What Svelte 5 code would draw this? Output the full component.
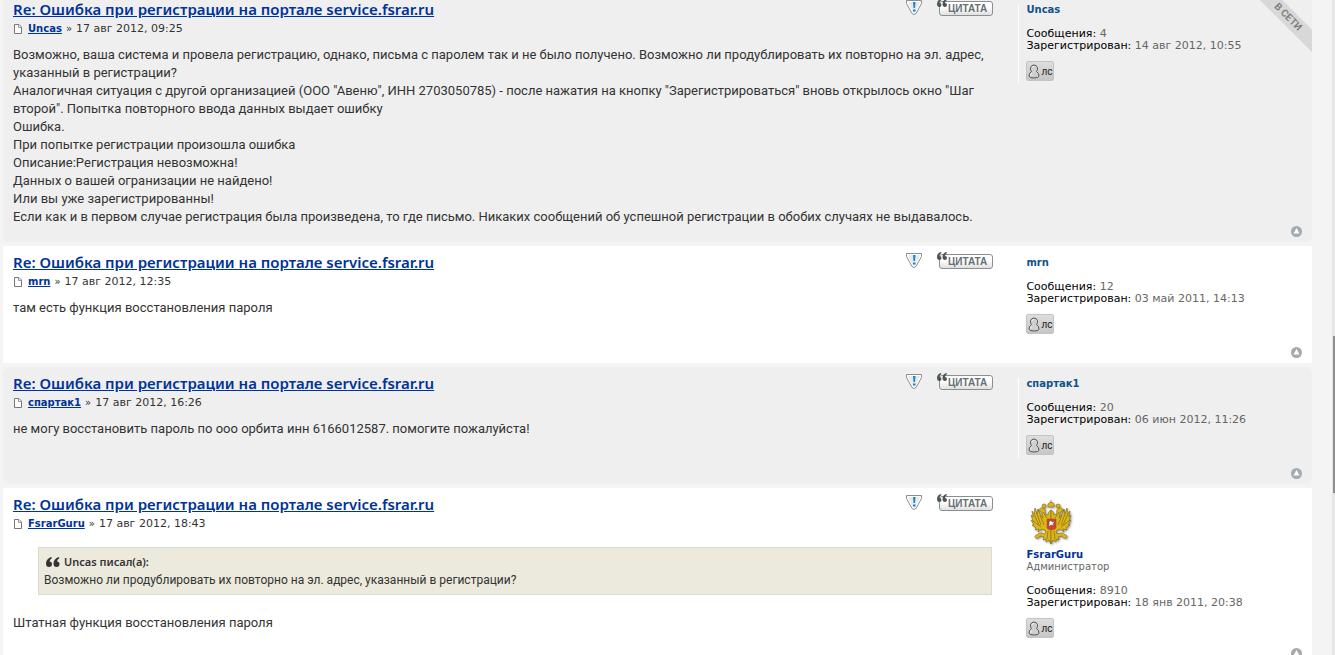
<!-- App.svelte -->
<script lang="ts">
    type Post = {
        id: number;
        author: string;
        date: string;
        quote?: { author: string; text: string };
        lines: string[];
        posts: number;
        joined: string;
        rank?: string;
        admin?: boolean;
        online?: boolean;
    };

    const title = 'Re: Ошибка при регистрации на портале service.fsrar.ru';

    const posts: Post[] = [
        {
            id: 1,
            author: 'Uncas',
            date: '17 авг 2012, 09:25',
            lines: [
                'Возможно, ваша система и провела регистрацию, однако, письма с паролем так и не было получено. Возможно ли продублировать их повторно на эл. адрес, указанный в регистрации?',
                'Аналогичная ситуация с другой организацией (ООО "Авеню", ИНН 2703050785) - после нажатия на кнопку "Зарегистрироваться" вновь открылось окно "Шаг второй". Попытка повторного ввода данных выдает ошибку',
                'Ошибка.',
                'При попытке регистрации произошла ошибка',
                'Описание:Регистрация невозможна!',
                'Данных о вашей огранизации не найдено!',
                'Или вы уже зарегистрированны!',
                'Если как и в первом случае регистрация была произведена, то где письмо. Никаких сообщений об успешной регистрации в обобих случаях не выдавалось.'
            ],
            posts: 4,
            joined: '14 авг 2012, 10:55',
            online: true
        },
        {
            id: 2,
            author: 'mrn',
            date: '17 авг 2012, 12:35',
            lines: ['там есть функция восстановления пароля'],
            posts: 12,
            joined: '03 май 2011, 14:13'
        },
        {
            id: 3,
            author: 'спартак1',
            date: '17 авг 2012, 16:26',
            lines: ['не могу восстановить пароль по ооо орбита инн 6166012587. помогите пожалуйста!'],
            posts: 20,
            joined: '06 июн 2012, 11:26'
        },
        {
            id: 4,
            author: 'FsrarGuru',
            date: '17 авг 2012, 18:43',
            quote: {
                author: 'Uncas',
                text: 'Возможно ли продублировать их повторно на эл. адрес, указанный в регистрации?'
            },
            lines: ['Штатная функция восстановления пароля'],
            posts: 8910,
            joined: '18 янв 2011, 20:38',
            rank: 'Администратор',
            admin: true
        }
    ];
</script>

<!-- half of the double-headed eagle, drawn twice and mirrored -->
{#snippet eagleHalf()}
    <path d="M20 10 C18 11 17 13 17 15 L14 14 C15 11 14 8 11 8 C9 8 8 9 7 11 L9 11 C10 11 11 12 11 14 L12 18 L9 14 L7 9 L6 14 L4 8 L3 14 L1 11 L2 17 L0 15 L2 21 L0 20 L3 25 L1 25 L5 28 L4 30 L8 29 L7 32 L11 29 L15 31 L14 34 C11 33 8 32 6 35 C4 35 3 37 5 38 C7 39 9 37 9 36 L13 37 L12 40 L15 39 L15 42 L18 40 L20 44 Z" />
    <path class="feather" d="M3 14 L8 25 M6 14 L10 25 M9 15 L13 25 M2 21 L10 27 M17 31 L16 39 M12 12 L16 18" />
    <circle cx="13" cy="6" r="2" />
{/snippet}

<div class="page">
    <main class="topic">
        {#each posts as post, i (post.id)}
            <article class="post {i % 2 === 0 ? 'bg2' : 'bg1'}" id="p{post.id}">
                {#if post.online}
                    <div class="online"><span>В СЕТИ</span></div>
                {/if}
                <div class="inner">
                    <div class="postbody">
                        <div class="head">
                            <h3><a href="#p{post.id}">{title}</a></h3>
                            <div class="buttons">
                                <button class="report" title="Пожаловаться на это сообщение" aria-label="Пожаловаться на это сообщение">
                                    <svg width="18" height="17" viewBox="0 0 18 17">
                                        <path d="M1.500 1.500 H16.500 V4.500 L11 14.500 Q9 16.500 7 14.500 L1.500 4.500 Z" fill="#fff" stroke="#8b8f92" />
                                        <path d="M3 3 H15 L10 13.500 H8 Z" fill="#e9e9e9" />
                                        <path d="M8 3 H10.500 L10 9 H8.500 Z M8 10.500 H10.500 V12.500 H8 Z" fill="#1a86cf" />
                                    </svg>
                                </button>
                                <button class="cite" title="Ответить с цитатой">
                                    <svg width="11" height="9" viewBox="0 0 11 9" aria-hidden="true">
                                        <path d="M4 0 Q0 1 0 5 Q0 8 2.500 8 Q4.500 8 4.500 6 Q4.500 4 2.500 4 Q2.500 2 4.500 1 Z M9.500 0 Q5.500 1 5.500 5 Q5.500 8 8 8 Q10 8 10 6 Q10 4 8 4 Q8 2 10 1 Z" fill="#4c5457" />
                                    </svg>
                                    ЦИТАТА
                                </button>
                            </div>
                        </div>
                        <p class="author">
                            <svg width="10" height="10" viewBox="0 0 10 10" aria-hidden="true">
                                <path d="M1.500 0.500 H6 L8.500 3 V9.500 H1.500 Z" fill="#fff" stroke="#777" />
                                <path d="M5.500 0.500 V3.500 H8.500" fill="none" stroke="#999" />
                            </svg>
                            <a href="#p{post.id}">{post.author}</a>
                            <span class="sep">»</span>
                            <span>{post.date}</span>
                        </p>
                        <div class="content">
                            {#if post.quote}
                                <blockquote>
                                    <cite>
                                        <svg width="14" height="10" viewBox="0 0 14 10" aria-hidden="true">
                                            <path d="M5 0 Q0 2 0 6.500 Q0 10 3 10 Q6 10 6 7 Q6 4.500 3.500 4.500 Q3.500 2.500 6 1 Z M12.500 0 Q7.500 2 7.500 6.500 Q7.500 10 10.500 10 Q13.500 10 13.500 7 Q13.500 4.500 11 4.500 Q11 2.500 13.500 1 Z" fill="#333" />
                                        </svg>
                                        {post.quote.author} писал(а):
                                    </cite>
                                    <p>{post.quote.text}</p>
                                </blockquote>
                            {/if}
                            {#each post.lines as line}
                                <p>{line}</p>
                            {/each}
                        </div>
                    </div>

                    <aside class="profile">
                        {#if post.admin}
                            <svg class="avatar" width="50" height="50" viewBox="0 0 50 50" aria-label="Герб">
                                <g class="eagle" transform="translate(5 1)">
                                    {@render eagleHalf()}
                                    <g transform="translate(40 0) scale(-1 1)">{@render eagleHalf()}</g>
                                    <path d="M17 7 Q16 3 20 2 Q24 3 23 7 Z M20 0 V3" />
                                    <path class="shield" d="M16 19 H25 V28 Q25 29 20 30 Q16 29 16 28 Z" />
                                    <path class="rider" d="M18 22 L20 20 L21 22 L24 21 L22 24 L23 26 L20 25 L18 27 Z" />
                                </g>
                            </svg>
                        {/if}
                        <a class="name" class:admin={post.admin} href="#p{post.id}">{post.author}</a>
                        {#if post.rank}
                            <div class="rank">{post.rank}</div>
                        {/if}
                        <dl>
                            <div><dt>Сообщения:</dt> <dd>{post.posts}</dd></div>
                            <div><dt>Зарегистрирован:</dt> <dd>{post.joined}</dd></div>
                        </dl>
                        <button class="pm" title="Личное сообщение">
                            <svg width="12" height="15" viewBox="0 0 12 15" aria-hidden="true">
                                <path d="M3.500 7.500 Q2 6 2.500 3.500 Q3.500 1 6 1 Q8.500 1 9.500 3.500 Q10 6 8.500 7.500 Q11 9 11 12 Q11 14 6 14 Q1 14 1 12 Q1 9 3.500 7.500 Z" fill="#cfcfcf" stroke="#555" />
                                <path d="M4.500 3.500 Q5 2.500 6 2.500 M3.500 9.500 Q2.500 10.500 2.500 11.500" fill="none" stroke="#fff" />
                            </svg>
                            лс
                        </button>
                    </aside>
                </div>
                <div class="back2top">
                    <a href="#p1" aria-label="Вернуться к началу">
                        <svg width="11" height="11" viewBox="0 0 11 11">
                            <circle cx="5.500" cy="5.500" r="5.500" fill="#a4abb0" />
                            <path d="M5.500 2 L8.500 7.500 H2.500 Z" fill="#fff" />
                        </svg>
                    </a>
                </div>
            </article>
        {/each}
    </main>
    <div class="track"><div class="thumb"></div></div>
</div>

<style>
:global(body) {
    margin: 0;
    background-color: #f4f4f4;
}

.page {
    display: flex;
    height: 100vh;
    overflow: hidden;
    font-family: Verdana, "DejaVu Sans", sans-serif;
    font-size: 11px;
    color: #333;
}

.topic {
    flex: 1;
    display: flex;
    flex-direction: column;
    gap: 4px;
    margin: -7px 20px 0 3px;
}

.track {
    display: flex;
    flex-direction: column;
    width: 3px;
    background-color: #e6e6e6;
}

.thumb {
    width: 2px;
    height: 24%;
    margin: 336px 0 0 1px;
    background-color: #8e8e8e;
}

button {
    margin: 0;
    padding: 0;
    border: none;
    background: none;
    cursor: pointer;
}

p, h3, dl, dd {
    margin: 0;
}

.post {
    position: relative;
    flex: none;
    padding: 5px 10px;
}

.bg1 {
    background-color: #fff;
}

.bg2 {
    background-color: #efefef;
    border-radius: 6px;
}

.inner {
    display: flex;
    justify-content: space-between;
    align-items: flex-start;
}

.postbody {
    width: 76%;
}

.head {
    display: flex;
    justify-content: space-between;
    align-items: flex-start;
    height: 24px;
}

h3 {
    font-family: "Noto Sans", sans-serif;
    font-size: 15px;
    line-height: 23px;
    font-weight: 600;
}

h3 a, .author a {
    color: #039;
    text-decoration: underline;
}

.buttons {
    display: flex;
    gap: 16px;
}

.report {
    height: 17px;
    padding-top: 1px;
}

.report svg {
    display: block;
}

.cite {
    position: relative;
    width: 54px;
    height: 15px;
    margin-top: 3px;
    padding-left: 4px;
    border: 1px solid #8b8f92;
    border-radius: 3px;
    background: linear-gradient(#fff 40%, #e0e0e0);
    font-family: "Liberation Sans", sans-serif;
    font-size: 10px;
    line-height: 13px;
    font-weight: bold;
    color: #667075;
}

.cite svg {
    position: absolute;
    top: -3px;
    left: -3px;
}

.author {
    display: flex;
    align-items: center;
    height: 14px;
    line-height: 14px;
}

.author svg {
    margin-right: 5px;
}

.author a {
    font-size: 10px;
    font-weight: bold;
}

.sep {
    margin: 0 4px;
    font-size: 10px;
}

.content {
    margin-top: 10px;
    font-family: Roboto, sans-serif;
    font-size: 13px;
    line-height: 18px;
}

blockquote {
    margin: 16px 1px 19px 25px;
    padding: 5px;
    border: 1px solid #dbdbce;
    background-color: #ebeadd;
}

cite {
    display: flex;
    align-items: center;
    gap: 4px;
    padding-left: 2px;
    font-family: "Noto Sans", sans-serif;
    font-size: 11px;
    font-style: normal;
    font-weight: 600;
}

blockquote p {
    font-size: 12px;
}

.profile {
    box-sizing: border-box;
    width: 22%;
    min-height: 80px;
    margin: 6px 0 10px;
    padding-left: 7px;
    border-left: 1px solid #fff;
    line-height: 12px;
    color: #666;
}

.avatar {
    display: block;
}

.eagle {
    fill: #dcb51c;
    stroke: #7d6a1c;
    stroke-width: 0.6;
    filter: drop-shadow(1px 1px 1px #999);
}

.feather {
    fill: none;
    stroke: #8f7410;
    stroke-width: 0.8;
}

.shield {
    fill: #df3c22;
}

.rider {
    fill: #f3f3f3;
    stroke: #557;
}

.name {
    display: block;
    font-size: 10px;
    font-weight: bold;
    color: #105289;
    text-decoration: none;
}

.admin {
    color: #039;
}

.rank {
    font-size: 10px;
}

dl {
    margin: 12px 0 9px;
}

dt, dd {
    display: inline;
}

dt {
    color: #000;
}

.pm {
    display: flex;
    align-items: center;
    gap: 1px;
    width: 28px;
    height: 20px;
    padding-left: 1px;
    border: 1px solid #c4c4c4;
    border-radius: 2px;
    background: linear-gradient(#dedede, #c6c6c6);
    font-family: Roboto, sans-serif;
    font-size: 10px;
    color: #222;
}

.pm svg {
    flex: none;
}

.back2top {
    display: flex;
    justify-content: flex-end;
    height: 11px;
}

.back2top a {
    height: 11px;
}

.back2top svg {
    display: block;
}

.online {
    position: absolute;
    top: 0;
    right: 0;
    width: 60px;
    height: 60px;
    overflow: hidden;
}

.online span {
    position: absolute;
    top: 16px;
    right: -26px;
    width: 100px;
    transform: rotate(45deg);
    background-color: #d8d8d8;
    font-family: Roboto, sans-serif;
    font-size: 10px;
    font-weight: 600;
    line-height: 16px;
    text-align: center;
    color: #7c7c7c;
}
</style>
